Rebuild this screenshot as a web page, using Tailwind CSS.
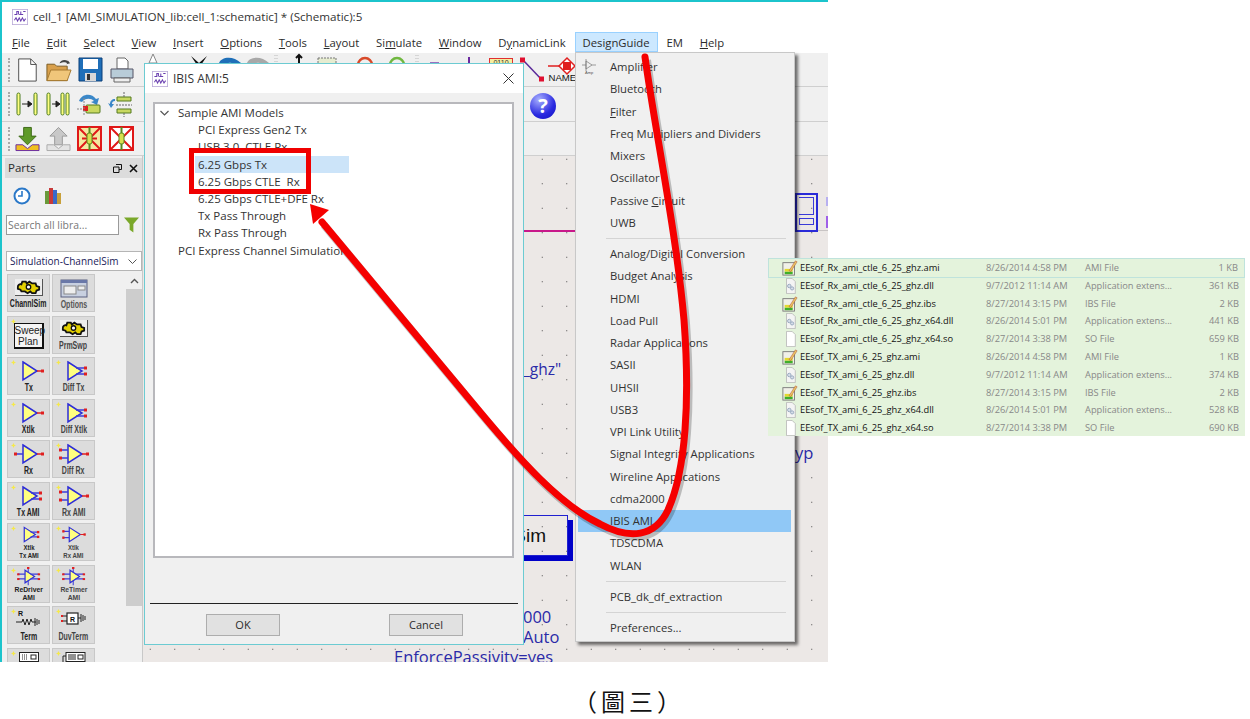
<!DOCTYPE html>
<html lang="en">
<head>
<meta charset="UTF-8">
<title>cell_1 schematic - IBIS AMI</title>
<script src="https://cdn.jsdelivr.net/npm/@tailwindcss/browser@4"></script>
</head>
<body class="bg-white">
<svg class="hidden">
  <symbol id="sch" viewBox="0 0 20 20"><rect x="0.5" y="0.5" width="19" height="19" fill="#fff" stroke="#b9a9d8"/><path d="M3 7h3V3h2v4M9 7h2V3M11 3v4h3M14 3h3M3 14l2-3 2 4 2-4 2 4 2-4 2 4 2-3" fill="none" stroke="#6a3fb0" stroke-width="1.3"/></symbol>
  <symbol id="spark" viewBox="0 0 6 6"><path d="M3 0l1 2 2 1-2 1-1 2-1-2-2-1 2-1z" fill="#f5e94a"/></symbol>
  <symbol id="tri" viewBox="0 0 30 24"><path d="M9 3l14 9-14 9z" fill="#ffff80" stroke="#2d2dd8" stroke-width="1.5"/><path d="M23 12h5" stroke="#e02020" stroke-width="1.5"/><rect x="27" y="10.5" width="3" height="3" fill="#e02020"/></symbol>
  <symbol id="tri2" viewBox="0 0 30 24"><path d="M9 3l14 9-14 9z" fill="#ffff80" stroke="#2d2dd8" stroke-width="1.5"/><path d="M17 9h9M17 15h9" stroke="#3c3cd8" stroke-width="1.3"/><rect x="25" y="7.5" width="3" height="3" fill="#e02020"/><rect x="25" y="13.5" width="3" height="3" fill="#e02020"/></symbol>
  <symbol id="trirx" viewBox="0 0 30 24"><path d="M9 3l14 9-14 9z" fill="#ffff80" stroke="#2d2dd8" stroke-width="1.5"/><path d="M1 12h8" stroke="#3c3cd8" stroke-width="1.5"/><path d="M23 12h5" stroke="#e02020" stroke-width="1.5"/><rect x="0" y="10.5" width="3" height="3" fill="#e02020"/><rect x="27" y="10.5" width="3" height="3" fill="#e02020"/></symbol>
  <symbol id="tridrx" viewBox="0 0 30 24"><path d="M9 3l14 9-14 9z" fill="#ffff80" stroke="#2d2dd8" stroke-width="1.5"/><path d="M1 8h8M1 16h8" stroke="#3c3cd8" stroke-width="1.5"/><path d="M23 12h5" stroke="#e02020" stroke-width="1.5"/><rect x="0" y="6.5" width="3" height="3" fill="#e02020"/><rect x="0" y="14.5" width="3" height="3" fill="#e02020"/><rect x="27" y="10.5" width="3" height="3" fill="#e02020"/></symbol>
  <symbol id="redrv" viewBox="0 0 30 24"><path d="M10 4l12 8-12 8z" fill="#ffff80" stroke="#2d2dd8" stroke-width="1.5"/><path d="M1 9h9M1 15h9M17 9h10M17 15h10M14 1v6M14 17v6" stroke="#3c3cd8" stroke-width="1.3"/><rect x="0" y="8" width="3" height="2.5" fill="#e02020"/><rect x="0" y="14" width="3" height="2.5" fill="#e02020"/><rect x="26" y="8" width="3" height="2.5" fill="#e02020"/><rect x="26" y="14" width="3" height="2.5" fill="#e02020"/><rect x="12.5" y="0" width="3" height="2.5" fill="#e02020"/></symbol>
  <symbol id="gear" viewBox="0 0 30 18"><path d="M3 9a3 3 0 0 1 4-3l1-3h4l1 2 3-2 3 2h4l1 3 3 1v3l-3 1-1 3h-4l-2-2-3 2-3-2h-4l-1-2-3-1z" fill="#e3d000" stroke="#111" stroke-width="2"/><circle cx="15" cy="9" r="2.5" fill="#fff" stroke="#111" stroke-width="1.5"/></symbol>
  <symbol id="txt" viewBox="0 0 15 20"><path d="M2.5.5h7l4 4v15h-11z" fill="#fff" stroke="#b5b5b5"/></symbol>
  <symbol id="dll" viewBox="0 0 15 20"><path d="M2.5.5h7l4 4v15h-11z" fill="#f4f4f4" stroke="#b5b5b5"/><circle cx="6" cy="10" r="2.2" fill="#d5dde8" stroke="#8da0b8"/><circle cx="9.5" cy="13" r="2" fill="#d5dde8" stroke="#8da0b8"/></symbol>
  <symbol id="ami" viewBox="0 0 18 18"><rect x="1" y="3" width="13" height="14" fill="#f0f0e8" stroke="#777"/><path d="M3 13h9v3H3z" fill="#3fae2a"/><path d="M3 10h9v3H3z" fill="#e3d92f"/><path d="M8 12l7-11 2 1-7 11z" fill="#e8c860" stroke="#a33" stroke-width="0.5"/></symbol>
</svg>

<div class="relative w-[1250px] h-[719px] bg-white overflow-hidden font-['Open_Sans','Noto_Sans',sans-serif] text-[12px] text-[#2b2b2b]">

  <!-- main ADS schematic window -->
  <div class="w-[828px] h-[662px] flex flex-col border-t-2 border-l-2 border-[#1cc4cc] overflow-hidden">
    <div class="h-[29px] flex items-center gap-[5px] pl-[10px] shrink-0 bg-white">
      <svg class="w-[16px] h-[16px]"><use href="#sch"/></svg>
      <span class="text-[11.65px] text-[#333]">cell_1 [AMI_SIMULATION_lib:cell_1:schematic] * (Schematic):5</span>
    </div>
    <div class="h-[22px] flex items-center pl-[10px] gap-[16.8px] shrink-0 bg-white text-[11.3px] pt-[2px]">
      <span><u>F</u>ile</span><span><u>E</u>dit</span><span><u>S</u>elect</span><span><u>V</u>iew</span><span><u>I</u>nsert</span><span><u>O</u>ptions</span><span><u>T</u>ools</span><span><u>L</u>ayout</span><span>Si<u>m</u>ulate</span><span><u>W</u>indow</span><span>D<u>y</u>namicLink</span>
      <span class="-mx-[8px] px-[7px] h-[20px] -mt-[2px] flex items-center pt-[2px] bg-[#cce8ff] border border-[#99d1ff]">DesignGuide</span>
      <span>EM</span><span><u>H</u>elp</span>
    </div>

    <!-- toolbar rows -->
    <div class="h-[34px] shrink-0 bg-[#f0f0f0] border-b border-[#cfcfcf] flex items-center pl-[6px] gap-[6px]">
      <span class="w-[2px] h-[24px] border-l-2 border-dotted border-[#aaa]"></span>
      <svg class="ml-[-1px] w-[24px] h-[26px]" viewBox="0 0 26 26"><path d="M4 1h13l6 6v18H4z" fill="#fff" stroke="#444"/><path d="M17 1v6h6" fill="none" stroke="#444"/></svg>
      <svg class="w-[27px] h-[26px]" viewBox="0 0 28 26"><path d="M2 7h8l2 2h11v15H2z" fill="#d9a04c" stroke="#7a5a20"/><path d="M2 24l4-11h21l-4 11z" fill="#f0c67a" stroke="#a67a30"/><path d="M15 6c2-4 6-4 9-2l-1-2 3 4-4 1 1-1c-2-2-5-1-8 0z" fill="#444"/></svg>
      <svg class="w-[25px] h-[25px]" viewBox="0 0 25 25"><path d="M1 1h23v23H1z" fill="#1f6fb8" stroke="#0b3f78"/><rect x="5" y="2" width="15" height="10" fill="#fff"/><rect x="7" y="16" width="11" height="8" fill="#d8d8d8"/><rect x="9" y="17" width="3" height="6" fill="#333"/></svg>
      <svg class="w-[26px] h-[26px]" viewBox="0 0 26 26"><path d="M8 1h8l3 3v8H8z" fill="#fff" stroke="#666"/><path d="M2 12h22v9H2z" fill="#b8ccd8" stroke="#556"/><path d="M5 21h16v4H5z" fill="#eee" stroke="#666"/></svg>
      <svg class="ml-auto mr-[251px] w-[430px] h-[33px]" viewBox="0 0 430 33">
        <path d="M6 1l4 9H2z" fill="#fff" stroke="#888"/>
        <path d="M44 3l8 7 8-7-6 9h-4z" fill="#111"/>
        <path d="M72 10c2-6 14-8 22 0l-4 2c-4-3-10-3-14 0z" fill="#1f6fb8"/>
        <path d="M100 10c2-6 14-8 22 0l-4 2c-4-3-10-3-14 0z" fill="#a8a8a8"/>
        <path d="M128 2v8M130 2v8" stroke="#bbb" stroke-dasharray="1 2"/>
        <path d="M152 10V3M149 5l3-3 3 3" fill="none" stroke="#111" stroke-width="2"/>
        <rect x="171" y="5" width="18" height="7" fill="#e6ecd0" stroke="#777" stroke-dasharray="2 1"/>
        <circle cx="218" cy="12" r="7" fill="none" stroke="#d84a2a" stroke-width="2.500"/>
        <circle cx="250" cy="12" r="7" fill="none" stroke="#70b840" stroke-width="2.500"/>
        <path d="M269 2v8M271 2v8" stroke="#bbb" stroke-dasharray="1 2"/>
        <rect x="283" y="9" width="9" height="3" fill="#9a70c0"/>
        <path d="M322 4v7" stroke="#6a2aa0" stroke-width="2"/>
        <rect x="342.500" y="5.500" width="23" height="8" fill="#f6eea0" stroke="#e03030"/>
        <text x="354" y="12" text-anchor="middle" font-size="7" font-family="Liberation Sans" fill="#333">0110</text>
        <path d="M376 7l19 20" stroke="#5a2a9a" stroke-width="1.500"/>
        <rect x="373" y="4.500" width="5" height="5" fill="#e01030"/><rect x="392" y="23.500" width="5" height="5" fill="#e01030"/>
        <path d="M401 13h11" stroke="#e02020" stroke-width="1.500"/>
        <path d="M412 13l8-8 8 8-8 8z" fill="#fff" stroke="#e02020" stroke-width="1.500"/><rect x="416" y="9" width="8" height="8" fill="#e02020"/>
        <text x="401.500" y="28" font-size="9.600" font-family="Liberation Sans" fill="#111">NAME</text>
      </svg>
    </div>
    <div class="h-[35px] shrink-0 bg-[#f0f0f0] border-b border-[#cfcfcf] flex items-center pl-[6px] gap-[6px]">
      <span class="w-[2px] h-[24px] border-l-2 border-dotted border-[#aaa]"></span>
      <svg class="-ml-[1px] w-[24px] h-[26px]" viewBox="0 0 24 26"><rect x="2" y="2" width="3" height="22" rx="1.5" fill="#ffff80" stroke="#4a7a20"/><rect x="19" y="2" width="3" height="22" rx="1.5" fill="#ffff80" stroke="#4a7a20"/><path d="M7 13h9M13 10l4 3-4 3z" fill="#222" stroke="#222"/></svg>
      <svg class="ml-[1px] w-[24px] h-[26px]" viewBox="0 0 24 26"><rect x="1" y="2" width="3" height="22" rx="1.5" fill="#ffff80" stroke="#4a7a20"/><rect x="15" y="2" width="3" height="22" rx="1.5" fill="#ffff80" stroke="#4a7a20"/><rect x="20" y="2" width="3" height="22" rx="1.5" fill="#ffff80" stroke="#4a7a20"/><path d="M6 13h7M10 10l4 3-4 3z" fill="#222" stroke="#222"/></svg>
      <svg class="w-[25px] h-[26px]" viewBox="0 0 25 26"><path d="M3 10c3-8 13-8 17-2l3-1-2 7-6-3 3-1c-3-3-9-3-12 1z" fill="#3a87c8"/><rect x="10" y="14" width="14" height="8" rx="1" fill="#c8d860" stroke="#557a20"/><rect x="7" y="15" width="5" height="5" fill="#e02020"/><path d="M8 7v18M1 18h6" stroke="#888" stroke-dasharray="2 1"/></svg>
      <svg class="w-[25px] h-[26px]" viewBox="0 0 25 26"><path d="M8 8c-3 0-5 2-5 5l-2-1 3 5 3-4-2 0c0-2 1-3 3-3z" fill="#3a87c8"/><path d="M10 6h14v4H10zM10 18h14v4H10z" fill="#c8d860" stroke="#557a20"/><path d="M17 1v5M17 22v4M9 14h16" stroke="#666" stroke-dasharray="2 1"/></svg>
      <span class="absolute left-[530px] top-[93px] w-[26px] h-[26px] rounded-full bg-[radial-gradient(circle_at_35%_25%,#a8b0ff,#2a2ae0_60%,#1010c0)] text-white text-[20px] font-bold leading-[26px] text-center">?</span>
    </div>
    <div class="h-[34px] shrink-0 bg-[#f0f0f0] border-b border-[#cfcfcf] flex items-center pl-[6px] gap-[6px]">
      <span class="w-[2px] h-[24px] border-l-2 border-dotted border-[#aaa]"></span>
      <svg class="-ml-[1px] w-[25px] h-[26px]" viewBox="0 0 26 26"><path d="M9 1h8v9h5l-9 9-9-9h5z" fill="#5f9a2a" stroke="#3d6a18"/><path d="M1 19h7l5 4 5-4h7v6H1z" fill="#f0c020" stroke="#6a2aa0"/></svg>
      <svg class="w-[25px] h-[26px]" viewBox="0 0 26 26"><path d="M13 1l9 9h-5v9H9v-9H4z" fill="#c8c8c8" stroke="#999"/><path d="M1 19h7l5 4 5-4h7v6H1z" fill="#e4e4e4" stroke="#aaa"/></svg>
      <svg class="w-[25px] h-[25px]" viewBox="0 0 25 25"><rect x="1" y="1" width="23" height="23" fill="#f4e8a0" stroke="#e01818" stroke-width="2"/><path d="M1 1l23 23M24 1L1 24" stroke="#e01818" stroke-width="2"/><path d="M12.500 1v23" stroke="#5a8a20" stroke-width="2"/><path d="M5 12.500h15" stroke="#e01818" stroke-width="2"/><rect x="10" y="7" width="5" height="11" rx="2" fill="#d8e050" stroke="#5a8a20"/></svg>
      <svg class="ml-[1px] w-[25px] h-[25px]" viewBox="0 0 25 25"><rect x="1" y="1" width="23" height="23" fill="#fff" stroke="#e01818" stroke-width="2"/><path d="M1 1l23 23M24 1L1 24" stroke="#e01818" stroke-width="2"/><path d="M12.500 1v23" stroke="#5a8a20" stroke-width="2"/><rect x="10" y="7" width="5" height="11" rx="2" fill="#d8e050" stroke="#5a8a20"/></svg>
    </div>

    <div class="flex flex-1 min-h-0">
      <!-- parts panel -->
      <div class="w-[141px] shrink-0 bg-[#f0f0f0] flex flex-col pl-[3px] border-r border-[#c8c8c8]">
        <div class="h-[20px] mt-[2px] bg-[#dcdcdc] flex items-center justify-between px-[3px] shrink-0">
          <span class="text-[11.5px]">Parts</span>
          <span class="flex items-center gap-[7px] pr-[1px]">
            <svg class="w-[9px] h-[9px]" viewBox="0 0 9 9"><path d="M3 .5h5.500v5H6M.5 3h5.500v5.500H.5z" fill="none" stroke="#111"/></svg>
            <svg class="w-[9px] h-[9px]" viewBox="0 0 9 9"><path d="M1 1l7 7M8 1L1 8" stroke="#111" stroke-width="1.6"/></svg>
          </span>
        </div>
        <div class="h-[36px] flex items-center gap-[13px] pl-[8px] shrink-0">
          <svg class="w-[18px] h-[18px]" viewBox="0 0 18 18"><circle cx="9" cy="9" r="7.500" fill="#fff" stroke="#2a78c8" stroke-width="2"/><path d="M9 4v5H5" fill="none" stroke="#2a78c8" stroke-width="1.6"/></svg>
          <svg class="w-[18px] h-[18px]" viewBox="0 0 18 18"><rect x="1" y="4" width="4" height="13" fill="#6a9a3a"/><rect x="5" y="1" width="4" height="16" fill="#c83a3a"/><rect x="9" y="3" width="4" height="14" fill="#3a6ac8"/><rect x="13" y="6" width="4" height="11" fill="#c8a03a"/></svg>
        </div>
        <div class="h-[21px] flex items-center gap-[5px] shrink-0">
          <div class="w-[113px] h-[20px] ml-[1px] bg-white border border-[#9a9a9a] pl-[1px] leading-[18px] text-[10.4px] text-[#777]">Search all libra...</div>
          <svg class="w-[15px] h-[18px]" viewBox="0 0 16 18"><path d="M0 1h16L10 8v9l-4-3V8z" fill="#7aa82a"/></svg>
        </div>
        <div class="h-[20px] mt-[16px] bg-white border border-[#b5b5b5] flex items-center justify-between pl-[3px] pr-[4px] shrink-0 ml-[1px] whitespace-nowrap">
          <span class="text-[10px] text-[#1a1a5a]">Simulation-ChannelSim</span>
          <svg class="w-[9px] h-[5px]" viewBox="0 0 9 5"><path d="M.5.5l4 4 4-4" fill="none" stroke="#555"/></svg>
        </div>
        <div class="flex flex-1 min-h-0 mt-[2px] overflow-hidden">
          <div class="grid grid-cols-[43px_43px] auto-rows-[38px] gap-x-[2px] gap-y-[3.5px] pl-[2px] pt-[1px] h-fit text-[#222] text-[10px] font-semibold font-['Liberation_Sans'] text-center leading-[9px]">
            <div class="relative bg-[#dcdcdc] border border-[#c8c8c8] flex flex-col items-center"><svg class="mt-[4px] w-[28px] h-[17px] bg-[#eee] border-b border-r border-[#555]"><use href="#gear"/></svg><span class="mt-[3px] whitespace-nowrap scale-x-[0.7]">ChannlSim</span></div>
            <div class="relative bg-[#dcdcdc] border border-[#c8c8c8] flex flex-col items-center"><svg class="mt-[4px] w-[28px] h-[19px]" viewBox="0 0 28 19"><rect x="1" y="1" width="26" height="17" fill="#c8d0e0" stroke="#5a6080"/><rect x="1" y="1" width="26" height="3" fill="#6a78a8"/><rect x="4" y="7" width="12" height="8" fill="#eee" stroke="#888"/><rect x="18" y="7" width="7" height="4" fill="#eee" stroke="#888"/></svg><span class="mt-[2px] whitespace-nowrap scale-x-[0.7] text-[#555]">Options</span></div>
            <div class="relative bg-[#dcdcdc] border border-[#c8c8c8] flex flex-col items-center"><svg class="absolute left-[3px] top-[2px] w-[5px] h-[5px]"><use href="#spark"/></svg><span class="mt-[6px] w-[30px] h-[26px] bg-[#f4f4f4] border border-[#111] border-r-2 border-b-2 text-[10px] leading-[11px] font-normal pt-px">Sweep Plan</span></div>
            <div class="relative bg-[#dcdcdc] border border-[#c8c8c8] flex flex-col items-center"><svg class="mt-[3px] w-[28px] h-[17px] bg-[#eee] border-b border-r border-[#555]"><use href="#gear"/></svg><span class="mt-[4px] whitespace-nowrap scale-x-[0.7] text-[#444]">PrmSwp</span></div>
            <div class="relative bg-[#dcdcdc] border border-[#c8c8c8] flex flex-col items-center"><svg class="absolute left-[3px] top-[2px] w-[5px] h-[5px]"><use href="#spark"/></svg><svg class="mt-[1px] w-[30px] h-[24px]"><use href="#tri"/></svg><span class="mt-[0px] whitespace-nowrap scale-x-[0.7]">Tx</span></div>
            <div class="relative bg-[#dcdcdc] border border-[#c8c8c8] flex flex-col items-center"><svg class="absolute left-[3px] top-[2px] w-[5px] h-[5px]"><use href="#spark"/></svg><svg class="mt-[1px] w-[30px] h-[24px]"><use href="#tri2"/></svg><span class="mt-[0px] whitespace-nowrap scale-x-[0.7] text-[#444]">Diff Tx</span></div>
            <div class="relative bg-[#dcdcdc] border border-[#c8c8c8] flex flex-col items-center"><svg class="absolute left-[3px] top-[2px] w-[5px] h-[5px]"><use href="#spark"/></svg><svg class="mt-[1px] w-[30px] h-[24px]"><use href="#tri"/></svg><span class="mt-[0px] whitespace-nowrap scale-x-[0.7]">Xtlk</span></div>
            <div class="relative bg-[#dcdcdc] border border-[#c8c8c8] flex flex-col items-center"><svg class="absolute left-[3px] top-[2px] w-[5px] h-[5px]"><use href="#spark"/></svg><svg class="mt-[1px] w-[30px] h-[24px]"><use href="#tri2"/></svg><span class="mt-[0px] whitespace-nowrap scale-x-[0.7] text-[#444]">Diff Xtlk</span></div>
            <div class="relative bg-[#dcdcdc] border border-[#c8c8c8] flex flex-col items-center"><svg class="absolute left-[3px] top-[2px] w-[5px] h-[5px]"><use href="#spark"/></svg><svg class="mt-[1px] w-[30px] h-[24px]"><use href="#trirx"/></svg><span class="mt-[0px] whitespace-nowrap scale-x-[0.7]">Rx</span></div>
            <div class="relative bg-[#dcdcdc] border border-[#c8c8c8] flex flex-col items-center"><svg class="absolute left-[3px] top-[2px] w-[5px] h-[5px]"><use href="#spark"/></svg><svg class="mt-[1px] w-[30px] h-[24px]"><use href="#tridrx"/></svg><span class="mt-[0px] whitespace-nowrap scale-x-[0.7] text-[#444]">Diff Rx</span></div>
            <div class="relative bg-[#dcdcdc] border border-[#c8c8c8] flex flex-col items-center"><svg class="absolute left-[3px] top-[2px] w-[5px] h-[5px]"><use href="#spark"/></svg><svg class="mt-[1px] w-[30px] h-[24px]"><use href="#tri2"/></svg><span class="mt-[0px] whitespace-nowrap scale-x-[0.7]">Tx AMI</span></div>
            <div class="relative bg-[#dcdcdc] border border-[#c8c8c8] flex flex-col items-center"><svg class="absolute left-[3px] top-[2px] w-[5px] h-[5px]"><use href="#spark"/></svg><svg class="mt-[1px] w-[30px] h-[24px]"><use href="#tridrx"/></svg><span class="mt-[0px] whitespace-nowrap scale-x-[0.7] text-[#444]">Rx AMI</span></div>
            <div class="relative bg-[#dcdcdc] border border-[#c8c8c8] flex flex-col items-center"><svg class="absolute left-[3px] top-[2px] w-[5px] h-[5px]"><use href="#spark"/></svg><svg class="mt-[1px] w-[30px] h-[19px]" viewBox="0 0 30 24"><use href="#tri2"/></svg><span class="text-[8px] leading-[8px] whitespace-nowrap scale-x-[0.75]">Xtlk<br>Tx AMI</span></div>
            <div class="relative bg-[#dcdcdc] border border-[#c8c8c8] flex flex-col items-center"><svg class="absolute left-[3px] top-[2px] w-[5px] h-[5px]"><use href="#spark"/></svg><svg class="mt-[1px] w-[30px] h-[19px]" viewBox="0 0 30 24"><use href="#tridrx"/></svg><span class="text-[8px] leading-[8px] whitespace-nowrap scale-x-[0.75] text-[#444]">Xtlk<br>Rx AMI</span></div>
            <div class="relative bg-[#dcdcdc] border border-[#c8c8c8] flex flex-col items-center"><svg class="absolute left-[3px] top-[2px] w-[5px] h-[5px]"><use href="#spark"/></svg><svg class="mt-[1px] w-[28px] h-[19px]"><use href="#redrv"/></svg><span class="text-[8px] leading-[8px] whitespace-nowrap scale-x-[0.85]">ReDriver<br>AMI</span></div>
            <div class="relative bg-[#dcdcdc] border border-[#c8c8c8] flex flex-col items-center"><svg class="absolute left-[3px] top-[2px] w-[5px] h-[5px]"><use href="#spark"/></svg><svg class="mt-[1px] w-[28px] h-[19px]"><use href="#redrv"/></svg><span class="text-[8px] leading-[8px] whitespace-nowrap scale-x-[0.85] text-[#444]">ReTimer<br>AMI</span></div>
            <div class="relative bg-[#dcdcdc] border border-[#c8c8c8] flex flex-col items-center"><svg class="absolute left-[3px] top-[2px] w-[5px] h-[5px]"><use href="#spark"/></svg><svg class="mt-[2px] w-[26px] h-[20px]" viewBox="0 0 26 20"><text x="2" y="7" font-size="7" fill="#111" font-family="Liberation Sans">R</text><path d="M0 13h6l1-3 2 6 2-6 2 6 2-6 1 3h4M19 9v8M21 10v6M23 11v4" fill="none" stroke="#222"/></svg><span class="mt-[3px] whitespace-nowrap scale-x-[0.7]">Term</span></div>
            <div class="relative bg-[#dcdcdc] border border-[#c8c8c8] flex flex-col items-center"><svg class="absolute left-[3px] top-[2px] w-[5px] h-[5px]"><use href="#spark"/></svg><svg class="mt-[2px] w-[26px] h-[20px]" viewBox="0 0 26 20"><rect x="6" y="4" width="11" height="11" fill="#fff" stroke="#222" stroke-width="1.2"/><text x="9" y="12.500" font-size="7" fill="#111" font-family="Liberation Sans">R</text><path d="M1 7h5M1 12h5M17 9h3M20 5v8M22 6v6M24 7v4" stroke="#222"/><rect x="0" y="6" width="2" height="2" fill="#e02020"/><rect x="0" y="11" width="2" height="2" fill="#e02020"/></svg><span class="mt-[3px] whitespace-nowrap scale-x-[0.7] text-[#444]">DuvTerm</span></div>
            <div class="relative bg-[#dcdcdc] border border-[#c8c8c8] flex flex-col items-center"><svg class="absolute left-[3px] top-[2px] w-[5px] h-[5px]"><use href="#spark"/></svg><svg class="mt-[3px] w-[20px] h-[10px]" viewBox="0 0 20 10"><rect x=".5" y=".5" width="19" height="9" fill="#fff" stroke="#222"/><path d="M3 3h6M3 5h6M3 7h6" stroke="#222" stroke-dasharray="1 1"/><rect x="12" y="3" width="5" height="4" fill="none" stroke="#222"/></svg></div>
            <div class="relative bg-[#dcdcdc] border border-[#c8c8c8] flex flex-col items-center"><svg class="absolute left-[3px] top-[2px] w-[5px] h-[5px]"><use href="#spark"/></svg><svg class="mt-[3px] w-[24px] h-[12px]" viewBox="0 0 24 12"><path d="M1 11V4h3" fill="none" stroke="#222"/><rect x="4" y=".5" width="19" height="9" fill="#fff" stroke="#222"/><path d="M6 3h8M6 5h8M6 7h8" stroke="#222"/><rect x="16" y="3" width="5" height="4" fill="none" stroke="#222"/></svg></div>
          </div>
          <!-- palette scrollbar -->
          <div class="ml-auto w-[16px] flex flex-col shrink-0">
            <div class="h-[16px] flex items-center justify-center bg-[#f0f0f0]"><svg class="w-[9px] h-[6px]" viewBox="0 0 9 6"><path d="M1 5l3.500-3.500L8 5" fill="none" stroke="#555" stroke-width="1.4"/></svg></div>
            <div class="h-[317px] bg-[#cdcdcd]"></div>
          </div>
        </div>
      </div>

      <!-- schematic canvas -->
      <div class="relative flex-1 bg-[#ece8e6] bg-[radial-gradient(#444_0.7px,transparent_0.9px)] bg-[length:24.5px_24.5px] bg-[position:-5px_-9px] text-[#2a2aa8] text-[16.5px] overflow-hidden">
        <div class="absolute left-[370px] top-[74px] w-[70px] h-[2px] bg-[#c8188a]"></div>
        <div class="absolute left-[640px] top-[74px] w-[45px] h-px bg-[#c8c4c4]"></div>
        <div class="absolute left-[683px] top-[41px] w-[2px] h-[9px] bg-[#b8b0f0]"></div>
        <div class="absolute left-[683px] top-[60px] w-[2px] h-[12px] bg-[#a060e8]"></div>
        <div class="absolute left-[380px] top-[201px] leading-[24px] text-[15.5px]">_ghz"</div>
        <div class="absolute left-[652px] top-[285px] leading-[24px]">yp</div>
        <div class="absolute left-[300px] top-[359px] w-[125px] h-[41px] border border-[#2020d0] shadow-[5px_5px_0_#0000c8] text-[#111] text-[19px] text-right pr-[21px] leading-[39px] font-['Liberation_Sans']">Sim</div>
        <div class="absolute left-[380px] top-[451px] leading-[20px]">000</div>
        <div class="absolute left-[380px] top-[471px] leading-[20px]">Auto</div>
        <div class="absolute left-[251px] top-[491px] leading-[20px] whitespace-nowrap">EnforcePassivity=yes</div>
        <div class="absolute left-[652px] top-[37px] w-[23px] h-[39px] border-2 border-[#2a2ad8] p-[2px] flex flex-col gap-[3px]"><span class="h-[18px] border border-[#3a3ad8] border-l-0"></span><span class="h-[7px] border border-[#3a3ad8]"></span></div>
      </div>
    </div>
  </div>

  <!-- IBIS AMI dialog -->
  <div class="absolute left-[144px] top-[63px] w-[380px] h-[582px] bg-[#f0f0f0] border border-[#6ccbd2] flex flex-col">
    <div class="h-[29px] bg-white flex items-center pl-[7px] gap-[5px] shrink-0">
      <svg class="w-[16px] h-[16px]"><use href="#sch"/></svg>
      <span class="text-[12px] text-[#333]">IBIS AMI:5</span>
      <svg class="ml-auto mr-[9px] w-[11px] h-[11px]" viewBox="0 0 11 11"><path d="M.5.5l10 10M10.500.5l-10 10" stroke="#333"/></svg>
    </div>
    <div class="mt-[9px] ml-[8px] mr-[9px] h-[456px] bg-white border-2 border-[#b8b8bc] shrink-0 text-[11.5px] text-[#333] leading-[17.2px]">
      <div class="flex items-center"><svg class="ml-[5px] mr-[9px] w-[9px] h-[6px]" viewBox="0 0 9 6"><path d="M.5 1l4 4 4-4" fill="none" stroke="#555" stroke-width="1.2"/></svg>Sample AMI Models</div>
      <div class="pl-[43px]">PCI Express Gen2 Tx</div>
      <div class="pl-[43px]">USB 3.0&nbsp; CTLE Rx</div>
      <div class="ml-[40px] w-[154px] bg-[#cce4f9] pl-[3px]">6.25 Gbps Tx</div>
      <div class="pl-[43px]">6.25 Gbps CTLE&nbsp; Rx</div>
      <div class="pl-[43px]">6.25 Gbps CTLE+DFE Rx</div>
      <div class="pl-[43px]">Tx Pass Through</div>
      <div class="pl-[43px]">Rx Pass Through</div>
      <div class="pl-[23px]">PCI Express Channel Simulation</div>
    </div>
    <div class="mt-[45px] mx-[5px] h-px bg-[#222] shrink-0"></div>
    <div class="flex justify-between pl-[61px] pr-[60px] mt-[10px]">
      <span class="w-[74px] h-[22px] bg-[#e1e1e1] border border-[#adadad] text-center leading-[19px] text-[11px]">OK</span>
      <span class="w-[74px] h-[22px] bg-[#e1e1e1] border border-[#adadad] text-center leading-[19px] text-[11px]">Cancel</span>
    </div>
  </div>

  <!-- DesignGuide dropdown -->
  <div class="absolute left-[575px] top-[52px] w-[220px] h-[590px] bg-[#f0f0f0] border border-[#c8c8c8] shadow-[3px_3px_3px_rgba(0,0,0,0.55)] py-[3px] text-[11.25px] text-[#333] pl-[34px] leading-[22.250px]">
    <svg class="absolute left-[5px] top-[5px] w-[16px] h-[17px]" viewBox="0 0 16 17"><path d="M5 3l6 4-6 4zM1 7h4M11 7h4M5 1v12" fill="none" stroke="#777" stroke-width="0.7"/><text x="4" y="16" font-size="4" fill="#555" font-family="Liberation Sans">Amp</text></svg>
    <div>Amplifier</div><div>Bluetooth</div><div><u>F</u>ilter</div><div>Freq Multipliers and Dividers</div><div>Mixers</div><div>Oscillator</div><div>Passive <u>C</u>ircuit</div><div>UWB</div>
    <div class="h-px bg-[#d4d4d4] -ml-[4px] mr-[8px] my-[4px]"></div>
    <div>Analog/Digital Conversion</div><div>Budget Analysis</div><div>HDMI</div><div>Load Pull</div><div>Radar Applications</div><div>SASII</div><div>UHSII</div><div>USB3</div><div>VPI Link Utility</div><div>Signal Integrity Applications</div><div>Wireline Applications</div><div>cdma2000</div>
    <div class="-ml-[32px] mr-[3px] pl-[32px] bg-[#90c8f6]">IBIS AMI</div>
    <div>TDSCDMA</div><div>WLAN</div>
    <div class="h-px bg-[#d4d4d4] -ml-[4px] mr-[8px] my-[4px]"></div>
    <div>PCB_dk_df_extraction</div>
    <div class="h-px bg-[#d4d4d4] -ml-[4px] mr-[8px] my-[4px]"></div>
    <div>Preferences...</div>
  </div>

  <!-- pasted file list -->
  <div class="absolute left-[768px] top-[258px] w-[477px] h-[178px] bg-[#e4f3dc] text-[9.300px] text-[#888] leading-[17.800px]">
    <div class="grid grid-cols-[31px_186px_99px_1fr_40px] pr-[6px] border border-[#bfe3dc] -mb-px"><svg class="w-[16px] h-[16px] ml-[13px] mt-px"><use href="#ami"/></svg><span class="text-[#111]">EEsof_Rx_ami_ctle_6_25_ghz.ami</span><span>8/26/2014 4:58 PM</span><span>AMI File</span><span class="text-right">1 KB</span></div>
    <div class="grid grid-cols-[31px_186px_99px_1fr_40px] pr-[6px] pl-px"><svg class="w-[13px] h-[16px] ml-[15px] mt-px"><use href="#dll"/></svg><span class="text-[#111]">EEsof_Rx_ami_ctle_6_25_ghz.dll</span><span>9/7/2012 11:14 AM</span><span>Application extens...</span><span class="text-right">361 KB</span></div>
    <div class="grid grid-cols-[31px_186px_99px_1fr_40px] pr-[6px] pl-px"><svg class="w-[16px] h-[16px] ml-[13px] mt-px"><use href="#ami"/></svg><span class="text-[#111]">EEsof_Rx_ami_ctle_6_25_ghz.ibs</span><span>8/27/2014 3:15 PM</span><span>IBS File</span><span class="text-right">2 KB</span></div>
    <div class="grid grid-cols-[31px_186px_99px_1fr_40px] pr-[6px] pl-px"><svg class="w-[13px] h-[16px] ml-[15px] mt-px"><use href="#dll"/></svg><span class="text-[#111]">EEsof_Rx_ami_ctle_6_25_ghz_x64.dll</span><span>8/26/2014 5:01 PM</span><span>Application extens...</span><span class="text-right">441 KB</span></div>
    <div class="grid grid-cols-[31px_186px_99px_1fr_40px] pr-[6px] pl-px"><svg class="w-[13px] h-[16px] ml-[15px] mt-px"><use href="#txt"/></svg><span class="text-[#111]">EEsof_Rx_ami_ctle_6_25_ghz_x64.so</span><span>8/27/2014 3:38 PM</span><span>SO File</span><span class="text-right">659 KB</span></div>
    <div class="grid grid-cols-[31px_186px_99px_1fr_40px] pr-[6px] pl-px"><svg class="w-[16px] h-[16px] ml-[13px] mt-px"><use href="#ami"/></svg><span class="text-[#111]">EEsof_TX_ami_6_25_ghz.ami</span><span>8/26/2014 4:58 PM</span><span>AMI File</span><span class="text-right">1 KB</span></div>
    <div class="grid grid-cols-[31px_186px_99px_1fr_40px] pr-[6px] pl-px"><svg class="w-[13px] h-[16px] ml-[15px] mt-px"><use href="#dll"/></svg><span class="text-[#111]">EEsof_TX_ami_6_25_ghz.dll</span><span>9/7/2012 11:14 AM</span><span>Application extens...</span><span class="text-right">374 KB</span></div>
    <div class="grid grid-cols-[31px_186px_99px_1fr_40px] pr-[6px] pl-px"><svg class="w-[16px] h-[16px] ml-[13px] mt-px"><use href="#ami"/></svg><span class="text-[#111]">EEsof_TX_ami_6_25_ghz.ibs</span><span>8/27/2014 3:15 PM</span><span>IBS File</span><span class="text-right">2 KB</span></div>
    <div class="grid grid-cols-[31px_186px_99px_1fr_40px] pr-[6px] pl-px"><svg class="w-[13px] h-[16px] ml-[15px] mt-px"><use href="#dll"/></svg><span class="text-[#111]">EEsof_TX_ami_6_25_ghz_x64.dll</span><span>8/26/2014 5:01 PM</span><span>Application extens...</span><span class="text-right">528 KB</span></div>
    <div class="grid grid-cols-[31px_186px_99px_1fr_40px] pr-[6px] pl-px"><svg class="w-[13px] h-[16px] ml-[15px] mt-px"><use href="#txt"/></svg><span class="text-[#111]">EEsof_TX_ami_6_25_ghz_x64.so</span><span>8/27/2014 3:38 PM</span><span>SO File</span><span class="text-right">690 KB</span></div>
  </div>

  <!-- red callouts drawn over the screenshot -->
  <div class="absolute left-[189px] top-[148px] w-[122px] h-[46px] border-[5px] border-[#f00000]"></div>
  <svg class="absolute left-0 top-0 w-[1250px] h-[719px] pointer-events-none" viewBox="0 0 1250 719">
    <path d="M645 57C655 130 676 230 684 320C690 400 686 470 668 510C655 537 630 540 600 524C560 505 520 460 480 412L322 222" fill="none" stroke="#000" stroke-opacity="0.22" stroke-width="8" transform="translate(2 3)"/>
    <path d="M645 57C655 130 676 230 684 320C690 400 686 470 668 510C655 537 630 540 600 524C560 505 520 460 480 412L322 222" fill="none" stroke="#f50000" stroke-width="7" stroke-linecap="round"/>
    <path d="M310 204L329 210L313 224z" fill="#f50000"/>
  </svg>

  <div class="absolute left-0 top-[686px] w-[1250px] pl-[573px] text-[24px] tracking-[4px] leading-[30px] text-[#111] font-['Noto_Sans_CJK_TC','Noto_Sans_CJK_SC',serif]">（圖三）</div>
</div>
</body>
</html>
